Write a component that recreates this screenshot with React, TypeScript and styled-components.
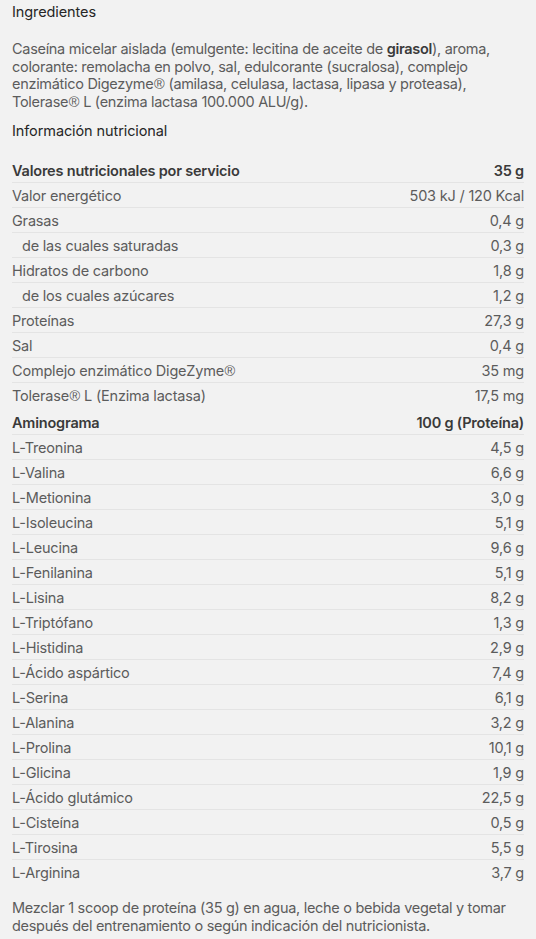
import styled, { createGlobalStyle } from 'styled-components'

const GlobalStyle = createGlobalStyle`
    html, body {
        margin: 0;
        padding: 0;
        background: #f2f2f2;
    }
    body {
        font-family: Inter, "Noto Sans", "Liberation Sans", sans-serif;
        -webkit-font-smoothing: antialiased;
    }
`

const Page = styled.div`
    width: 536px;
    min-height: 939px;
    box-sizing: border-box;
    padding: 2px 12px 0;
    background: #f2f2f2;
    color: #5a5a5a;
`

const Heading = styled.h3`
    margin: 0;
    font-size: 14.5px;
    font-weight: 400;
    line-height: 20px;
    color: #262626;
    letter-spacing: -0.1px;
`

const Paragraph = styled.p`
    margin: 18px 0 11px;
    font-size: 14.5px;
    line-height: 17.6px;
    color: #5c5c5c;
    letter-spacing: -0.3px;

    b {
        font-weight: 600;
        color: #3a3a3a;
    }
`

// the reference shows ® at full text size, not as a superscript
const Reg = styled.span`
    display: inline-block;
    padding-left: 0.5px;
    font-family: "Liberation Sans", sans-serif;
    font-size: 1em;
    line-height: 1;
    letter-spacing: 0;
`

const Table = styled.div<{ $gap?: number }>`
    display: flex;
    flex-direction: column;
    margin-top: ${p => p.$gap ?? 0}px;
`

const Row = styled.div<{ $head?: boolean; $indent?: boolean; $last?: boolean }>`
    display: flex;
    justify-content: space-between;
    align-items: center;
    height: 25px;
    box-sizing: border-box;
    padding-left: ${p => (p.$indent ? 10 : 0)}px;
    border-bottom: ${p => (p.$last ? 'none' : '1px solid #e4e4e4')};
    font-size: 14.5px;
    letter-spacing: -0.2px;
    font-weight: ${p => (p.$head ? 600 : 400)};
    color: ${p => (p.$head ? '#3a3a3a' : '#5c5c5c')};
`

const Footer = styled.p`
    margin: 14px 0 0;
    font-size: 14.5px;
    line-height: 18px;
    color: #5c5c5c;
    letter-spacing: -0.3px;
`

type Item = { label: React.ReactNode; key: string; value: string; indent?: boolean }

const nutrition: Item[] = [
    { key: 'energia', label: 'Valor energético', value: '503 kJ / 120 Kcal' },
    { key: 'grasas', label: 'Grasas', value: '0,4 g' },
    { key: 'saturadas', label: 'de las cuales saturadas', value: '0,3 g', indent: true },
    { key: 'hidratos', label: 'Hidratos de carbono', value: '1,8 g' },
    { key: 'azucares', label: 'de los cuales azúcares', value: '1,2 g', indent: true },
    { key: 'proteinas', label: 'Proteínas', value: '27,3 g' },
    { key: 'sal', label: 'Sal', value: '0,4 g' },
    { key: 'digezyme', label: <>Complejo enzimático DigeZyme<Reg>®</Reg></>, value: '35 mg' },
    { key: 'tolerase', label: <>Tolerase<Reg>®</Reg> L (Enzima lactasa)</>, value: '17,5 mg' },
]

const aminos: [string, string][] = [
    ['L-Treonina', '4,5 g'],
    ['L-Valina', '6,6 g'],
    ['L-Metionina', '3,0 g'],
    ['L-Isoleucina', '5,1 g'],
    ['L-Leucina', '9,6 g'],
    ['L-Fenilanina', '5,1 g'],
    ['L-Lisina', '8,2 g'],
    ['L-Triptófano', '1,3 g'],
    ['L-Histidina', '2,9 g'],
    ['L-Ácido aspártico', '7,4 g'],
    ['L-Serina', '6,1 g'],
    ['L-Alanina', '3,2 g'],
    ['L-Prolina', '10,1 g'],
    ['L-Glicina', '1,9 g'],
    ['L-Ácido glutámico', '22,5 g'],
    ['L-Cisteína', '0,5 g'],
    ['L-Tirosina', '5,5 g'],
    ['L-Arginina', '3,7 g'],
]

export default function App() {
    return (
        <Page>
            <GlobalStyle />
            <Heading>Ingredientes</Heading>
            <Paragraph>
                Caseína micelar aislada (emulgente: lecitina de aceite de <b>girasol</b>), aroma,
                colorante: remolacha en polvo, sal, edulcorante (sucralosa), complejo
                enzimático Digezyme<Reg>®</Reg> (amilasa, celulasa, lactasa, lipasa y proteasa),
                Tolerase<Reg>®</Reg> L (enzima lactasa 100.000 ALU/g).
            </Paragraph>
            <Heading>Información nutricional</Heading>

            <Table $gap={17}>
                <Row $head>
                    <span>Valores nutricionales por servicio</span>
                    <span>35 g</span>
                </Row>
                {nutrition.map((item, i) => (
                    <Row key={item.key} $indent={item.indent} $last={i === nutrition.length - 1}>
                        <span>{item.label}</span>
                        <span>{item.value}</span>
                    </Row>
                ))}
            </Table>

            <Table $gap={2}>
                <Row $head>
                    <span>Aminograma</span>
                    <span>100 g (Proteína)</span>
                </Row>
                {aminos.map(([label, value], i) => (
                    <Row key={label} $last={i === aminos.length - 1}>
                        <span>{label}</span>
                        <span>{value}</span>
                    </Row>
                ))}
            </Table>

            <Footer>
                Mezclar 1 scoop de proteína (35 g) en agua, leche o bebida vegetal y tomar
                después del entrenamiento o según indicación del nutricionista.
            </Footer>
        </Page>
    )
}
